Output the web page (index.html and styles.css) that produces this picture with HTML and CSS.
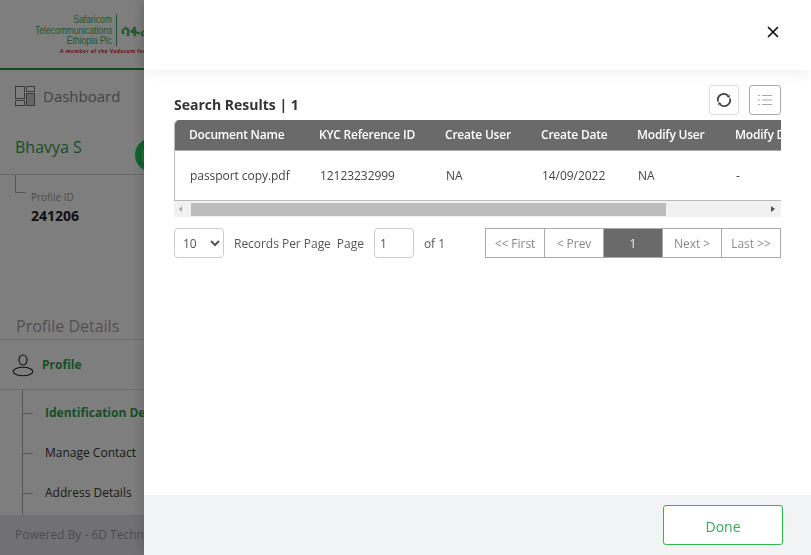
FILE: index.html

```html
<!DOCTYPE html>
<html lang="en">
<head>
  <meta charset="UTF-8" />
  <title>Identification Details</title>
  <link rel="stylesheet" href="styles.css">
</head>
<body>
  <div class="page">
    <header class="brand">
      <div class="brand-top">
        <div class="brand-name">
          <div>Safaricom</div>
          <div>Telecommunications</div>
          <div>Ethiopia Plc</div>
        </div>
        <div class="brand-amharic">ሳፋሪኮም</div>
      </div>
      <div class="brand-tag">A member of the Vodacom family</div>
    </header>

    <nav class="dash">
      <svg class="dash-icon" width="20" height="20" viewBox="0 0 20 20" fill="none" stroke="#777">
        <rect x="0.5" y="0.5" width="9" height="12" />
        <rect x="11.5" y="0.5" width="8" height="5" />
        <rect x="11.5" y="7.5" width="8" height="12" fill="#ccc" />
        <rect x="0.5" y="14.5" width="9" height="5" />
      </svg>
      <span>Dashboard</span>
    </nav>

    <div class="user">
      <span class="user-name">Bhavya S</span>
      <span class="user-badge"></span>
    </div>

    <div class="profile-id">
      <span class="corner"></span>
      <div class="id-text">
        <div class="id-label">Profile ID</div>
        <div class="id-value">241206</div>
      </div>
    </div>

    <h3 class="details-title">Profile Details</h3>

    <div class="profile-row">
      <svg width="22" height="24" viewBox="0 0 22 24" fill="none" stroke="#222" stroke-width="1.1">
        <ellipse cx="11" cy="7" rx="4" ry="5" />
        <ellipse cx="11" cy="18.5" rx="9.8" ry="4.2" />
      </svg>
      <span>Profile</span>
    </div>

    <ul class="tree">
      <li class="active">Identification Details</li>
      <li>Manage Contact</li>
      <li>Address Details</li>
    </ul>

    <footer class="powered">Powered By - 6D Technologies</footer>
  </div>

  <div class="overlay"></div>

  <aside class="drawer">
    <div class="drawer-head">
      <svg width="12" height="12" viewBox="0 0 12 12" stroke="#111" stroke-width="1.7">
        <path d="M1 1 L11 11 M11 1 L1 11" />
      </svg>
    </div>

    <div class="drawer-body">
      <div class="results-bar">
        <h4>Search Results | 1</h4>
        <div class="tools">
          <button class="tool">
            <svg width="16" height="16" viewBox="0 0 16 16" fill="none" stroke="#444" stroke-width="1.8">
              <path d="M2.1 9.6 A6 6 0 0 1 12 3.6" />
              <path d="M13.9 6.4 A6 6 0 0 1 4 12.4" />
              <path d="M13.8 2.6 L13.6 6 L10.6 4.8 Z" fill="#444" stroke="none" />
              <path d="M2.2 13.4 L2.4 10 L5.4 11.2 Z" fill="#444" stroke="none" />
            </svg>
          </button>
          <button class="tool tool-list">
            <svg width="14" height="12" viewBox="0 0 14 12" stroke="#aaa">
              <path d="M0 1.5 H2 M4 1.5 H14 M0 6 H2 M4 6 H14 M0 10.5 H2 M4 10.5 H14" />
            </svg>
          </button>
        </div>
      </div>

      <div class="table-wrap">
        <table>
          <thead>
            <tr>
              <th class="col-doc">Document Name</th>
              <th class="col-kyc">KYC Reference ID</th>
              <th class="col-user">Create User</th>
              <th class="col-date">Create Date</th>
              <th class="col-mod">Modify User</th>
              <th class="col-last">Modify Date</th>
            </tr>
          </thead>
          <tbody>
            <tr>
              <td>passport copy.pdf</td>
              <td>12123232999</td>
              <td>NA</td>
              <td>14/09/2022</td>
              <td>NA</td>
              <td>-</td>
            </tr>
          </tbody>
        </table>
      </div>
      <div class="hscroll">
        <span class="arrow arrow-left"></span>
        <span class="thumb"></span>
        <span class="arrow arrow-right"></span>
      </div>

      <div class="pager">
        <select class="per-page"><option>10</option></select>
        <span class="per-label">Records Per Page</span>
        <span class="page-label">Page</span>
        <input class="page-input" type="text" value="1">
        <span class="of-label">of 1</span>
        <div class="pages">
          <a>&lt;&lt; First</a>
          <a>&lt; Prev</a>
          <a class="current">1</a>
          <a>Next &gt;</a>
          <a>Last &gt;&gt;</a>
        </div>
      </div>
    </div>

    <div class="drawer-foot">
      <button class="done">Done</button>
    </div>
  </aside>
</body>
</html>
```

FILE: styles.css

```css
html, body {
  height: 100%;
}
body {
  margin: 0;
  overflow: hidden;
  font-family: "Open Sans", Arial, sans-serif;
  background: #fff;
}
.page {
  display: flex;
  flex-direction: column;
  height: 555px;
  background: #fdfdfd;
}
.brand {
  height: 70px;
  box-sizing: border-box;
  padding: 14px 0 0 34px;
  border-bottom: 2px solid #1f9a3c;
  white-space: nowrap;
  overflow: hidden;
}
.brand-top {
  display: flex;
  align-items: center;
}
.brand-name {
  display: flex;
  flex-direction: column;
  align-items: flex-end;
  width: 78px;
  padding-right: 4px;
  border-right: 1px solid #4aa860;
  font-family: "Liberation Sans", sans-serif;
  font-size: 11.5px;
  line-height: 10.5px;
  color: #3fae58;
}
.brand-name div {
  transform: scaleX(0.74);
  transform-origin: right;
}
.brand-amharic {
  margin-left: 4px;
  font-size: 15px;
  font-weight: bold;
  color: #3fae58;
}
.brand-tag {
  margin: 2px 0 0 26px;
  font-size: 5px;
  font-weight: bold;
  letter-spacing: 0.4px;
  color: #d8202a;
}
.dash {
  display: flex;
  align-items: center;
  gap: 8px;
  height: 52px;
  padding-left: 15px;
  font-size: 15px;
  color: #888;
}
.user {
  display: flex;
  align-items: flex-start;
  height: 53px;
  box-sizing: border-box;
  padding: 14px 0 0 15px;
  border-bottom: 1px solid #d4d4d4;
}
.user-name {
  width: 120px;
  font-size: 16px;
  line-height: 22px;
  color: #2f9e48;
}
.user-badge {
  position: relative;
  width: 34px;
  height: 34px;
  margin-top: 2px;
  border-radius: 50%;
  background: #20c85a;
}
.user-badge::before {
  content: "";
  position: absolute;
  left: 7px;
  top: 11px;
  width: 4px;
  height: 12px;
  border: 1px solid #9fd8b0;
  border-radius: 50%;
}
.profile-id {
  display: flex;
  height: 127px;
  padding-left: 15px;
}
.corner {
  width: 10px;
  height: 17px;
  border-left: 1px solid #aaa;
  border-bottom: 1px solid #aaa;
}
.id-text {
  padding: 15px 0 0 5px;
}
.id-label {
  font-size: 10px;
  color: #999;
}
.id-value {
  margin-top: 2px;
  font-size: 14px;
  font-weight: bold;
  color: #222;
}
.details-title {
  margin: 0;
  padding: 12px 0 0 16px;
  height: 38px;
  box-sizing: border-box;
  border-bottom: 1px solid #ddd;
  font-size: 16px;
  font-weight: normal;
  line-height: 24px;
  color: #a0a0a8;
}
.profile-row {
  display: flex;
  align-items: center;
  gap: 8px;
  height: 49px;
  padding-left: 12px;
  border-bottom: 1px solid #ddd;
  font-size: 12px;
  font-weight: bold;
  color: #2f9e48;
}
.tree {
  flex: 1;
  list-style: none;
  margin: 0 0 0 22px;
  padding: 3px 0 0;
  border-left: 1px solid #aaa;
  font-size: 12px;
  color: #333;
  white-space: nowrap;
}
.tree li {
  position: relative;
  height: 40px;
  line-height: 40px;
  padding-left: 22px;
}
.tree li::before {
  content: "";
  position: absolute;
  left: 0;
  top: 20px;
  width: 10px;
  border-top: 1px solid #aaa;
}
.tree .active {
  font-weight: bold;
  color: #2f9e48;
}
.powered {
  height: 40px;
  padding-left: 15px;
  background: #e2e3e7;
  font-size: 12px;
  line-height: 40px;
  color: #999;
  white-space: nowrap;
}
.overlay {
  position: fixed;
  inset: 0;
  background: rgba(0, 0, 0, 0.5);
}
.drawer {
  position: fixed;
  top: 0;
  right: 0;
  bottom: 0;
  left: 144px;
  display: flex;
  flex-direction: column;
  background: #fff;
  box-shadow: -4px 0 10px rgba(0, 0, 0, 0.12);
}
.drawer-head {
  display: flex;
  align-items: center;
  justify-content: flex-end;
  height: 70px;
  padding: 0 32px 6px 0;
  box-sizing: border-box;
  box-shadow: 0 2px 14px rgba(0, 0, 0, 0.07);
}
.drawer-body {
  flex: 1;
  padding: 15px 30px 0;
}
.results-bar {
  display: flex;
  align-items: flex-end;
  justify-content: space-between;
  height: 30px;
  margin-bottom: 5px;
}
.results-bar h4 {
  margin: 0;
  font-size: 14px;
  font-weight: 700;
  line-height: 20px;
  color: #333;
}
.tools {
  display: flex;
  gap: 10px;
}
.tool {
  display: flex;
  align-items: center;
  justify-content: center;
  width: 30px;
  height: 30px;
  padding: 0;
  background: #fff;
  border: 1px solid #ddd;
  border-radius: 3px;
}
.tool-list {
  width: 32px;
  border-color: #aaa;
}
.table-wrap {
  overflow: hidden;
  height: 81px;
  box-sizing: border-box;
  border-left: 1px solid #bbb;
  border-bottom: 1px solid #bbb;
  border-radius: 5px 0 0 0;
}
table {
  border-collapse: collapse;
  table-layout: fixed;
  width: 690px;
  font-size: 12px;
}
th {
  height: 30px;
  padding: 0 0 0 14px;
  box-sizing: border-box;
  background: #6a6a6a;
  border-bottom: 1px solid #aaa;
  font-weight: 600;
  letter-spacing: -0.22px;
  text-align: left;
  color: #fff;
  white-space: nowrap;
}
td {
  height: 49px;
  padding: 0 0 0 15px;
  letter-spacing: -0.05px;
  color: #444;
  white-space: nowrap;
}
.col-doc { width: 130px; }
.col-kyc { width: 126px; }
.col-user { width: 96px; }
.col-date { width: 96px; }
.col-mod { width: 98px; }
.hscroll {
  display: flex;
  align-items: center;
  height: 16px;
  background: #f1f1f1;
}
.thumb {
  width: 475px;
  height: 13px;
  margin-left: 9px;
  background: #bcbcbc;
}
.arrow {
  width: 0;
  height: 0;
  border-top: 3px solid transparent;
  border-bottom: 3px solid transparent;
}
.arrow-left {
  margin-left: 5px;
  border-right: 3px solid #a3a3a3;
}
.arrow-right {
  margin-left: 105px;
  border-left: 4px solid #505050;
}
.pager {
  display: flex;
  align-items: center;
  height: 30px;
  margin-top: 11px;
  font-size: 12px;
  letter-spacing: -0.03px;
  color: #555;
}
.per-page {
  width: 50px;
  height: 30px;
  padding-left: 4px;
  background: #fff;
  border: 1px solid #ccc;
  border-radius: 4px;
  font-family: inherit;
  font-size: 12px;
  color: #555;
}
.per-label {
  margin-left: 10px;
}
.page-label {
  margin-left: 6px;
}
.page-input {
  width: 40px;
  height: 30px;
  box-sizing: border-box;
  margin-left: 10px;
  padding: 0 5px;
  border: 1px solid #ccc;
  border-radius: 4px;
  font-family: inherit;
  font-size: 12px;
  color: #555;
}
.of-label {
  margin-left: 10px;
}
.pages {
  display: flex;
  margin-left: auto;
  border: 1px solid #aaa;
  box-sizing: border-box;
  height: 30px;
}
.pages a {
  display: block;
  width: 58px;
  line-height: 30px;
  text-align: center;
  border-left: 1px solid #aaa;
  color: #888;
}
.pages a:first-child {
  border-left: 0;
}
.pages .current {
  background: #6a6a6a;
  color: #e6f2fa;
}
.drawer-foot {
  display: flex;
  align-items: center;
  justify-content: flex-end;
  height: 60px;
  padding-right: 28px;
  background: #f2f3f5;
}
.done {
  width: 120px;
  height: 40px;
  padding-top: 3px;
  background: #fff;
  border: 1px solid #2db84d;
  border-radius: 3px;
  font-family: inherit;
  font-size: 14px;
  color: #3aa856;
}
```
